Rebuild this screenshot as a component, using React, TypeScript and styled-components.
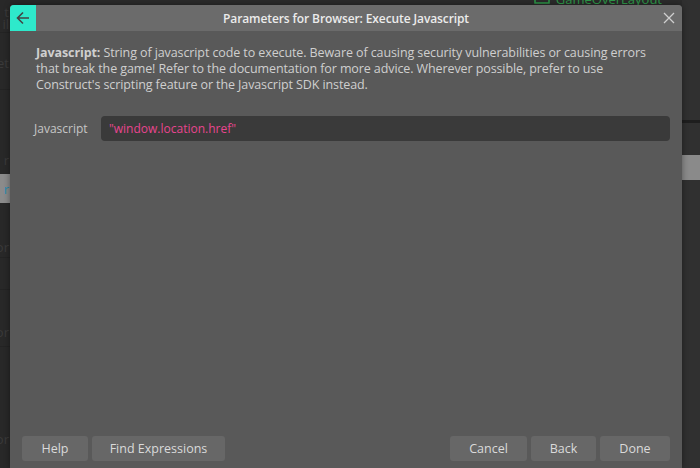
import React from "react";
import styled, { createGlobalStyle } from "styled-components";

const Global = createGlobalStyle`
  html, body { margin: 0; padding: 0; background: #2a2a2a; }
  body { width: 700px; height: 468px; overflow: hidden; font-family: "Open Sans", "Noto Sans", sans-serif; }
`;

const Screen = styled.div`
  position: relative;
  width: 700px;
  height: 468px;
  overflow: hidden;
  background: #2a2a2a;
  display: flex;
`;

const LeftPane = styled.div`
  width: 60px;
  display: flex;
  flex-direction: column;
  background: #282828;
`;

const PaneRow = styled.div<{ $sel?: boolean; $blue?: boolean; $h: number; $pb?: number; $line?: boolean }>`
  height: ${(p) => p.$h}px;
  box-sizing: border-box;
  display: flex;
  align-items: flex-end;
  justify-content: flex-end;
  padding-right: 51px;
  padding-bottom: ${(p) => p.$pb ?? 6}px;
  font-size: 13px;
  line-height: 16px;
  color: ${(p) => (p.$blue ? "#2a8bb0" : "#3a3a3a")};
  background: ${(p) => (p.$sel ? "#8b8b8b" : "transparent")};
  border-bottom: ${(p) => (p.$line ? "1px solid #232323" : "none")};
`;

const CenterPane = styled.div`
  flex: 1;
  display: flex;
  flex-direction: column;
  background: #2b2b2b;
`;

const TopBar = styled.div`
  height: 8px;
  display: flex;
  justify-content: flex-end;
  align-items: flex-start;
  padding-right: 20px;
  gap: 6px;
  color: #2e9b4a;
  font-size: 13px;
  line-height: 1;
  margin-top: -7px;
`;

const RightPane = styled.div`
  width: 18px;
  display: flex;
  flex-direction: column;
  background: #303030;
  padding-top: 120px;
`;

const RightLine = styled.div`
  height: 3px;
  background: #1e1e1e;
`;

const RightSpacer = styled.div<{ $h: number }>`
  height: ${(p) => p.$h}px;
`;

const RightBand = styled.div`
  height: 25px;
  background: #8a8a8a;
`;

const Dialog = styled.div`
  position: absolute;
  left: 10px;
  top: 5px;
  width: 672px;
  height: 463px;
  background: #595959;
  border-radius: 4px 4px 0 0;
  display: flex;
  flex-direction: column;
  overflow: hidden;
  box-shadow: 0 0 6px rgba(0, 0, 0, 0.4);
`;

const Header = styled.div`
  height: 26px;
  background: #6b6b6b;
  display: flex;
  align-items: center;
  flex-shrink: 0;
`;

const BackBtn = styled.div`
  width: 26px;
  height: 26px;
  background: #2ee9cb;
  display: flex;
  align-items: center;
  justify-content: center;
`;

const Title = styled.div`
  flex: 1;
  text-align: center;
  color: #ececec;
  font-weight: 600;
  font-size: 12px;
  letter-spacing: -0.1px;
`;

const CloseBtn = styled.div`
  width: 26px;
  height: 26px;
  display: flex;
  align-items: center;
  justify-content: center;
`;

const Body = styled.div`
  flex: 1;
  display: flex;
  flex-direction: column;
  padding: 14px 12px 7px 12px;
`;

const Desc = styled.p`
  margin: 0;
  padding: 0 14px;
  color: #cfcfcf;
  font-size: 12.5px;
  line-height: 16px;
  letter-spacing: -0.1px;
`;

const Strong = styled.b`
  font-weight: 700;
`;

const ParamRow = styled.div`
  display: flex;
  align-items: center;
  margin-top: 23px;
  margin-left: 12px;
`;

const Label = styled.div`
  width: 67px;
  color: #c6c6c6;
  font-size: 12px;
`;

const Input = styled.div`
  flex: 1;
  height: 25px;
  background: #3a3a3a;
  border-radius: 4px;
  display: flex;
  align-items: center;
  padding-left: 8px;
  color: #e8458f;
  font-size: 12px;
`;

const Spacer = styled.div`
  flex: 1;
`;

const Footer = styled.div`
  display: flex;
  align-items: center;
  gap: 4px;
  height: 25px;
`;

const Btn = styled.div<{ $w: number }>`
  width: ${(p) => p.$w}px;
  height: 25px;
  background: #676767;
  border-radius: 3px;
  display: flex;
  align-items: center;
  justify-content: center;
  color: #dadada;
  font-size: 12.5px;
`;

export default function App() {
  return (
    <>
      <Global />
      <Screen>
        <LeftPane>
          <PaneRow $h={20} $pb={0}>t</PaneRow>
          <PaneRow $h={13} $pb={0} $line>il</PaneRow>
          <PaneRow $h={57} $pb={18} $line>et</PaneRow>
          <PaneRow $h={84} $pb={6}>r</PaneRow>
          <PaneRow $h={29} $pb={6} $sel $blue>r</PaneRow>
          <PaneRow $h={55} $pb={2} $line>or</PaneRow>
          <PaneRow $h={32} $pb={0} $line> </PaneRow>
          <PaneRow $h={57} $pb={6} $line>or</PaneRow>
          <PaneRow $h={110} $pb={10}>or</PaneRow>
        </LeftPane>
        <CenterPane>
          <TopBar>
            <svg width="16" height="12" viewBox="0 0 16 12">
              <rect x="1" y="0" width="14" height="10" fill="none" stroke="#2e9b4a" strokeWidth="1.5" />
            </svg>
            <span>GameOverLayout</span>
          </TopBar>
        </CenterPane>
        <RightPane>
          <RightLine />
          <RightSpacer $h={32} />
          <RightBand />
        </RightPane>
        <Dialog>
          <Header>
            <BackBtn>
              <svg width="16" height="16" viewBox="0 0 16 16">
                <path d="M14 8H2.5M8 2.5L2.5 8L8 13.5" fill="none" stroke="#444" strokeWidth="1.6" />
              </svg>
            </BackBtn>
            <Title>Parameters for Browser: Execute Javascript</Title>
            <CloseBtn>
              <svg width="12" height="12" viewBox="0 0 12 12">
                <path d="M1 1L11 11M11 1L1 11" stroke="#cfcfcf" strokeWidth="1.3" />
              </svg>
            </CloseBtn>
          </Header>
          <Body>
            <Desc>
              <Strong>Javascript:</Strong> String of javascript code to execute. Beware of causing security vulnerabilities or causing errors
              that break the game! Refer to the documentation for more advice. Wherever possible, prefer to use
              Construct's scripting feature or the Javascript SDK instead.
            </Desc>
            <ParamRow>
              <Label>Javascript</Label>
              <Input>"window.location.href"</Input>
            </ParamRow>
            <Spacer />
            <Footer>
              <Btn $w={66}>Help</Btn>
              <Btn $w={133}>Find Expressions</Btn>
              <Spacer />
              <Btn $w={77}>Cancel</Btn>
              <Btn $w={65}>Back</Btn>
              <Btn $w={70}>Done</Btn>
            </Footer>
          </Body>
        </Dialog>
      </Screen>
    </>
  );
}
